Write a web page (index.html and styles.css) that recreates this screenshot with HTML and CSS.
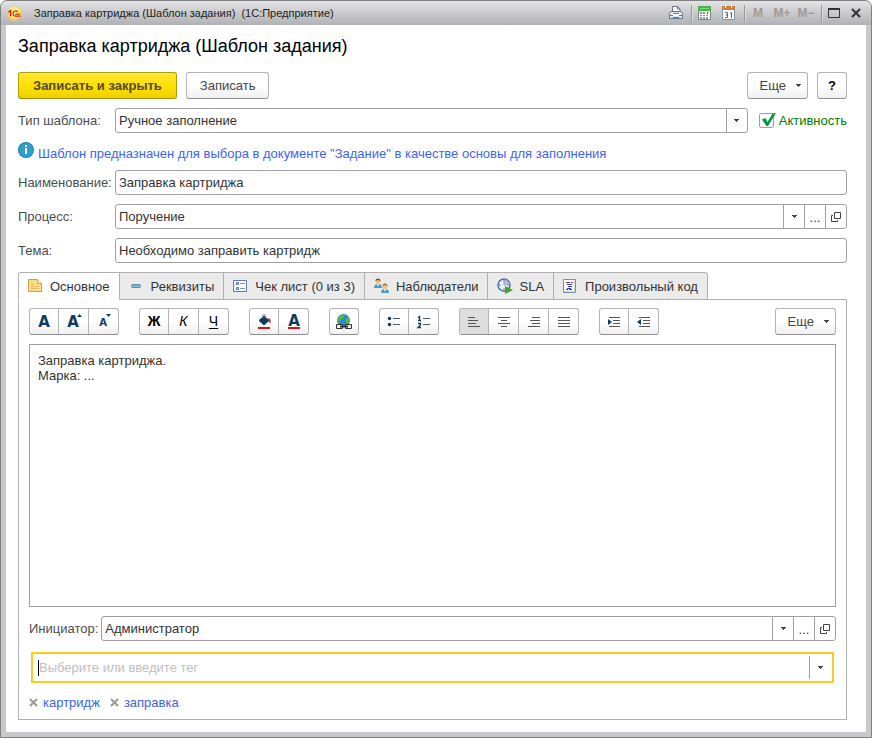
FILE: index.html
```html
<!DOCTYPE html>
<html lang="ru">
<head>
<meta charset="utf-8">
<meta name="viewport" content="width=device-width, initial-scale=1">
<title>Заправка картриджа (Шаблон задания)</title>
<link rel="stylesheet" href="styles.css">
</head>
<body>
<svg class="sprite" aria-hidden="true">
  <symbol id="i-open" viewBox="0 0 10 10"><path d="M3.5.5h6v6h-6zM2 3.5H.5v6h6V8" fill="none" stroke="#444"/></symbol>
  <symbol id="i-down" viewBox="0 0 5 3"><path d="M0 0h5v1H4v1H3v1H2V2H1V1H0z" fill="#444"/></symbol>
  <symbol id="i-x" viewBox="0 0 9 9"><path d="M1 1l7 7M8 1l-7 7" fill="none" stroke="#999" stroke-width="2"/></symbol>
</svg>
<div class="window">
  <header class="titlebar">
    <svg class="logo" viewBox="0 0 16 16" aria-hidden="true">
      <circle cx="8" cy="8" r="7.500" fill="#f7d24c"/><circle cx="8" cy="7" r="6.300" fill="#ffee80"/>
      <path d="M1.500 6.500L3.800 5v6" fill="none" stroke="#dd1c1c" stroke-width="1.600"/>
      <path d="M11.300 6.300a2.700 2.700 0 1 0-2.300 4.400H14.500M9 8.600H14" fill="none" stroke="#dd1c1c" stroke-width="1.300"/>
    </svg>
    <span class="caption">Заправка картриджа (Шаблон задания)&nbsp; (1С:Предприятие)</span>
    <div class="system">
      <button class="sys" aria-label="Печать"><svg width="16" height="16" viewBox="0 0 16 16"><path d="M4.500 8V1.500h5L12 4v4" fill="#fff" stroke="#64788e"/><path d="M9.500 1.500V4H12" fill="none" stroke="#64788e"/><path d="M1.500 8.500L3 6.500h10l1.500 2v5h-13z" fill="#dce6ef" stroke="#64788e"/><path d="M4 8h8v3H4z" fill="#fff"/><path d="M1 10.500h4M11 10.500h4M5 8.500h6M5 12.500h6" stroke="#64788e"/></svg></button>
      <i class="sep"></i>
      <button class="sys" aria-label="Калькулятор"><svg width="14" height="16" viewBox="0 0 14 16"><path d="M.5 1.500h12v13H.5z" fill="#fff" stroke="#788"/><path d="M0 1h13v5H0z" fill="#45b649"/><path d="M2 3h9v1H2z" fill="#7ada7d"/><path d="M2 7h2v2H2zM5 7h2v2H5zM2 10h2v1H2zM5 10h2v1H5zM2 12h2v2H2zM5 12h2v2H5zM8 10h2v1H8zM8 12h2v2H8z" fill="#8a9aa5"/><path d="M9 7h1v2H9z" fill="#e33"/></svg></button>
      <button class="sys" aria-label="Календарь"><svg width="14" height="16" viewBox="0 0 14 16"><path d="M.5 1.500h12v13H.5z" fill="#fff" stroke="#7f97aa"/><path d="M0 1h13v4H0z" fill="#c8843f"/><path d="M3.500 0v3M9.500 0v3" stroke="#fff"/><path d="M3 7.500h2.500v5H3M3.500 10h2M8 8.500l1.500-1V13" fill="none" stroke="#53697b"/></svg></button>
      <i class="sep"></i>
      <button class="sys mem">M</button>
      <button class="sys mem">M+</button>
      <button class="sys mem">M−</button>
      <i class="sep"></i>
      <button class="sys frame" aria-label="Развернуть"><svg width="12" height="10" viewBox="0 0 12 10"><path d="M.5 1v8.500h11V1z" fill="none" stroke="#333"/><path d="M0 0h12v2H0z" fill="#333"/></svg></button>
      <button class="sys frame" aria-label="Закрыть"><svg width="10" height="10" viewBox="0 0 10 10"><path d="M1 1l8 8M9 1L1 9" stroke="#333" stroke-width="2"/></svg></button>
    </div>
  </header>

  <main class="form">
    <h1>Заправка картриджа (Шаблон задания)</h1>

    <div class="commands">
      <button class="btn primary">Записать и закрыть</button>
      <button class="btn">Записать</button>
      <button class="btn more">Еще <svg class="down"><use href="#i-down"/></svg></button>
      <button class="btn help">?</button>
    </div>

    <div class="row">
      <label class="lbl" for="type">Тип шаблона:</label>
      <div class="field choice">
        <select id="type"><option>Ручное заполнение</option></select>
        <span class="pick"><svg class="down"><use href="#i-down"/></svg></span>
      </div>
      <label class="check"><input type="checkbox" checked><svg class="tick" viewBox="0 0 17 18"><path d="M3 7.500L6.300 6l2.200 4L13.500 1.500 17 1 9 14H7.500z" fill="#009646"/></svg><span>Активность</span></label>
    </div>

    <p class="hint">
      <svg width="16" height="16" viewBox="0 0 16 16" aria-hidden="true"><circle cx="8" cy="8" r="8" fill="#2a7fa8"/><circle cx="8" cy="8" r="7" fill="#2d9fd0"/><path d="M7 3h2v2H7zM7 6h2v6H7z" fill="#fff"/></svg>
      <span>Шаблон предназначен для выбора в документе "Задание" в качестве основы для заполнения</span>
    </p>

    <div class="row">
      <label class="lbl" for="name">Наименование:</label>
      <div class="field"><input id="name" type="text" value="Заправка картриджа"></div>
    </div>
    <div class="row">
      <label class="lbl" for="process">Процесс:</label>
      <div class="field">
        <input id="process" type="text" value="Поручение">
        <button class="pick" aria-label="Выбрать из списка"><svg class="down"><use href="#i-down"/></svg></button>
        <button class="pick dots">...</button>
        <button class="pick" aria-label="Открыть"><svg class="open"><use href="#i-open"/></svg></button>
      </div>
    </div>
    <div class="row">
      <label class="lbl" for="subject">Тема:</label>
      <div class="field"><input id="subject" type="text" value="Необходимо заправить картридж"></div>
    </div>

    <div class="tabs" role="tablist">
      <button class="tab active" role="tab" aria-selected="true"><svg viewBox="0 0 16 16"><path d="M.5 1.500h9l4 4v8H.5z" fill="#f6df86" stroke="#caa54a"/><path d="M9.500 1.500v4h4" fill="#fff4c0" stroke="#caa54a"/><path d="M3 6.500h3M3 8.500h4M8 8.500h3M3 10.500h5M9 10.500h2" stroke="#dcbb62"/></svg>Основное</button>
      <button class="tab" role="tab"><svg viewBox="0 0 16 16"><rect x="2.500" y="6.500" width="9" height="3" rx="1" fill="#84b4cc" stroke="#5d8ea8"/></svg>Реквизиты</button>
      <button class="tab" role="tab"><svg viewBox="0 0 16 16"><path d="M.5 2.500h13v11H.5z" fill="#f8faff" stroke="#6478b4"/><path d="M3.500 4.500h2v2h-2zM3.500 9.500h2v2h-2z" fill="#a9b8dc" stroke="#6478b4"/><path d="M7 5.500h5M7 10.500h5" stroke="#8795be"/></svg>Чек лист (0 из 3)</button>
      <button class="tab" role="tab"><svg viewBox="0 0 16 16"><circle cx="4" cy="3.500" r="2.500" fill="#f0c08a"/><path d="M1.500 3a2.500 2.500 0 0 1 5 0L4 2z" fill="#76502c"/><path d="M0 10q0-4 4-4t4 4z" fill="#4d9ac4"/><path d="M3 6h2L4 9z" fill="#fff"/><circle cx="11" cy="8.500" r="2.500" fill="#f0c08a"/><path d="M8.500 8a2.500 2.500 0 0 1 5 0L11 7z" fill="#a66c30"/><path d="M7 15q0-4 4-4t4 4z" fill="#4d9ac4"/><path d="M10 11h2l-1 3z" fill="#fff"/></svg>Наблюдатели</button>
      <button class="tab" role="tab"><svg viewBox="0 0 16 16"><circle cx="7" cy="7" r="6" fill="#eef4fc" stroke="#4a6eae" stroke-width="1.500"/><path d="M7 1.500V7h5.500A5.500 5.500 0 0 0 7 1.500z" fill="#a8c0e8"/><path d="M7 2v2M7 10v2M2 7h2M10 7h2" stroke="#d55"/><path d="M7 4v3l2 2" fill="none" stroke="#8aa6d6"/><path d="M8 8l8 4-8 4z" fill="#3da52c"/></svg>SLA</button>
      <button class="tab" role="tab"><svg viewBox="0 0 16 16"><path d="M.5 1.500h12v13H.5z" fill="#fff" stroke="#7890b0"/><path d="M1 13.500h11M11.500 2v12" stroke="#c8dcf0"/><path d="M3 4.500h2M8 4.500h2M3 11.500h2" stroke="#e02030"/><path d="M5 4.500h2M4 6.500h5M5 8.500h4M4 10.500h4M6 11.500h3" stroke="#3040d0"/></svg>Произвольный код</button>
    </div>

    <section class="panel">
      <div class="toolbar">
        <div class="group">
          <button class="tool" aria-label="Шрифт"><svg viewBox="0 0 16 16"><text class="glyph large" x="8" y="13">A</text></svg></button>
          <button class="tool" aria-label="Увеличить шрифт"><svg viewBox="0 0 16 16"><text class="glyph large" x="7" y="13">A</text><path d="M11 3h5l-2.500-3z" fill="#0d3c61"/></svg></button>
          <button class="tool" aria-label="Уменьшить шрифт"><svg viewBox="0 0 16 16"><text class="glyph small" x="7" y="12">A</text><path d="M10 0h5l-2.500 3z" fill="#0d3c61"/></svg></button>
        </div>
        <div class="group">
          <button class="tool letter bold">Ж</button>
          <button class="tool letter italic">К</button>
          <button class="tool letter under">Ч</button>
        </div>
        <div class="group">
          <button class="tool" aria-label="Цвет фона"><svg viewBox="0 0 16 16"><path d="M3 6.500L8 2l5 4.500L8 11z" fill="#0d3c61" stroke="#0d3c61" stroke-linejoin="round"/><path d="M6.500 4V1q1.500-1 3 0v3" fill="none" stroke="#8ba2b5"/><path d="M12 4q4 1 2 6-1-3-2-6z" fill="#e01010"/><path d="M2 13h12v2H2z" fill="#e01010"/></svg></button>
          <button class="tool" aria-label="Цвет текста"><svg viewBox="0 0 16 16"><text class="glyph large" x="8" y="12">A</text><path d="M2 13h12v2H2z" fill="#e01010"/></svg></button>
        </div>
        <div class="group">
          <button class="tool" aria-label="Гиперссылка"><svg viewBox="0 0 16 16"><circle cx="7.500" cy="6.500" r="6.500" fill="#258bd0"/><path d="M3 2q4-3 6-1l-2 4-3 1-1 3-2-3zM10 4l3 0 1 4-3 2-2-3z" fill="#5ab84a"/><path d="M.5 10.500h6v4h-6zM9.500 10.500h6v4h-6z" fill="#eee" stroke="#333"/><path d="M4 12.500h8" stroke="#333" stroke-width="2"/></svg></button>
        </div>
        <div class="group">
          <button class="tool" aria-label="Маркированный список"><svg viewBox="0 0 16 16"><circle cx="3.500" cy="4.500" r="1.700" fill="#0d3c61"/><circle cx="3.500" cy="10.500" r="1.700" fill="#0d3c61"/><path d="M7 4.500h7M7 10.500h7" stroke="#555"/></svg></button>
          <button class="tool" aria-label="Нумерованный список"><svg viewBox="0 0 16 16"><path d="M2 3.500l1.500-1V7M2 6.500h3M2 9.500h2.500v1.500L2 13.500h3" fill="none" stroke="#0d3c61" stroke-width="1.300"/><path d="M7 4.500h7M7 10.500h7" stroke="#555"/></svg></button>
        </div>
        <div class="group">
          <button class="tool pressed" aria-label="По левому краю"><svg viewBox="0 0 16 16"><path d="M2 3.500h7M2 6.500h10M2 9.500h8M2 12.500h12" stroke="#555"/></svg></button>
          <button class="tool" aria-label="По центру"><svg viewBox="0 0 16 16"><path d="M2 3.500h12M5 6.500h6M2 9.500h12M5 12.500h6" stroke="#555"/></svg></button>
          <button class="tool" aria-label="По правому краю"><svg viewBox="0 0 16 16"><path d="M6 3.500h8M4 6.500h10M6 9.500h8M2 12.500h12" stroke="#555"/></svg></button>
          <button class="tool" aria-label="По ширине"><svg viewBox="0 0 16 16"><path d="M2 3.500h12M2 6.500h12M2 9.500h12M2 12.500h12" stroke="#555"/></svg></button>
        </div>
        <div class="group">
          <button class="tool" aria-label="Увеличить отступ"><svg viewBox="0 0 16 16"><path d="M3 3.500h11M7 6.500h7M7 9.500h7M3 12.500h11" stroke="#555"/><path d="M2 5l4 3-4 3z" fill="#0d3c61"/></svg></button>
          <button class="tool" aria-label="Уменьшить отступ"><svg viewBox="0 0 16 16"><path d="M3 3.500h11M7 6.500h7M7 9.500h7M3 12.500h11" stroke="#555"/><path d="M5 5L1 8l4 3z" fill="#0d3c61"/></svg></button>
        </div>
        <button class="btn more">Еще <svg class="down"><use href="#i-down"/></svg></button>
      </div>

      <textarea class="editor" aria-label="Описание">Заправка картриджа.
Марка: ...</textarea>

      <div class="row owner">
        <label for="owner">Инициатор:</label>
        <div class="field">
          <input id="owner" type="text" value="Администратор">
          <button class="pick" aria-label="Выбрать из списка"><svg class="down"><use href="#i-down"/></svg></button>
          <button class="pick dots">...</button>
          <button class="pick" aria-label="Открыть"><svg class="open"><use href="#i-open"/></svg></button>
        </div>
      </div>

      <div class="tagbox">
        <i class="caret"></i>
        <input type="text" placeholder="Выберите или введите тег" aria-label="Тег">
        <button class="pick" aria-label="Выбрать из списка"><svg class="down"><use href="#i-down"/></svg></button>
      </div>

      <div class="tags">
        <button class="remove" aria-label="Удалить тег картридж"><svg class="x"><use href="#i-x"/></svg></button><a href="#">картридж</a>
        <button class="remove" aria-label="Удалить тег заправка"><svg class="x"><use href="#i-x"/></svg></button><a href="#">заправка</a>
      </div>
    </section>
  </main>
</div>
</body>
</html>
```
FILE: styles.css
```css
* { box-sizing: border-box; }

body {
  margin: 0;
  background: #fff;
  color: #333;
  font: 13px/15px "Liberation Sans", Arial, sans-serif;
}

button, input, select, textarea {
  margin: 0;
  padding: 0;
  border: 0;
  border-radius: 0;
  background: none;
  color: inherit;
  font: inherit;
  outline: 0;
}

svg { display: block; flex: none; }
.sprite { display: none; }
.down { width: 5px; height: 3px; }
.open { width: 10px; height: 10px; }
.x { width: 9px; height: 9px; }

.window {
  display: flex;
  flex-direction: column;
  min-height: 100vh;
  padding: 0 5px 5px;
  border: 1px solid #808083;
  border-radius: 7px 7px 0 0;
  background: #c8c9cc;
}

.titlebar {
  display: flex;
  align-items: center;
  height: 24px;
  margin: 0 -5px;
  padding: 0 4px 0 6px;
  border-radius: 6px 6px 0 0;
  background: linear-gradient(#e4e4e6, #cfcfd1 40%, #b0b1b4);
}
.logo { width: 15px; height: 15px; }
.caption {
  flex: 1;
  margin-left: 12px;
  color: #1c1c1c;
  font-size: 11px;
  white-space: nowrap;
}
.system { display: flex; align-items: center; }
.sys {
  display: flex;
  align-items: center;
  justify-content: center;
  min-width: 24px;
  height: 20px;
}
.sys.frame { min-width: 22px; }
.mem { color: #a39a93; font-size: 12px; font-weight: bold; }
.sep {
  width: 2px;
  height: 17px;
  margin-left: 3px;
  border-left: 1px solid #999;
  border-right: 1px solid #ddd;
}

.form {
  display: flex;
  flex: 1;
  flex-direction: column;
  padding: 10px 19px 12px 12px;
  background: #fff;
}

h1 {
  margin: 0 0 15px;
  color: #000;
  font-size: 18px;
  font-weight: normal;
  line-height: 22px;
}

.btn, .group {
  border: 1px solid #b4b4b4;
  border-bottom-color: #909090;
  border-radius: 3px;
  background: linear-gradient(#fff 50%, #f0f0f0);
}
.btn {
  height: 27px;
  padding: 0 13px;
  color: #444;
  white-space: nowrap;
}
.primary {
  padding: 0 14px;
  border-color: #b09c10 #b09c10 #a08e10;
  background: linear-gradient(#ffe838, #ffe000 50%, #efd000);
  color: #554a28;
  font-weight: bold;
}
.more {
  display: flex;
  align-items: center;
  gap: 10px;
  margin-left: auto;
  padding: 0 6px 0 12px;
}
.help { width: 30px; padding: 0; color: #000; font-weight: bold; }

.commands { display: flex; gap: 9px; margin-bottom: 9px; }

.row { display: flex; align-items: center; margin-bottom: 9px; }
.lbl { flex: 0 0 97px; white-space: nowrap; }
.row label { color: #4d4d4d; }

.field {
  display: flex;
  flex: 1;
  height: 25px;
  border: 1px solid #a0a0a0;
  border-radius: 3px;
}
.field input, .field select, .tagbox input {
  flex: 1;
  min-width: 0;
  padding: 0 3px;
}
.pick {
  display: flex;
  flex: none;
  align-items: center;
  justify-content: center;
  width: 21px;
  border-left: 1px solid #a0a0a0;
}
.dots { padding-top: 2px; }

.choice { display: grid; grid-template-columns: 1fr 21px; }
.choice select { grid-area: 1 / 1 / 2 / 3; appearance: none; }
.choice .pick { grid-area: 1 / 2; pointer-events: none; }

.row .check {
  display: grid;
  grid-template-columns: 16px auto;
  align-items: center;
  gap: 4px;
  margin-left: 11px;
  color: #008000;
}
.check input {
  grid-area: 1 / 1;
  width: 15px;
  height: 15px;
  appearance: none;
  border: 1px solid #a0a0a0;
  border-radius: 2px;
}
.tick { grid-area: 1 / 1; width: 17px; height: 18px; pointer-events: none; }

.hint {
  display: flex;
  gap: 4px;
  height: 19px;
  margin: 0 0 9px;
  color: #3c64f5;
}
.hint span { padding-top: 4px; }

.tabs { position: relative; z-index: 1; display: flex; }
.tab {
  display: flex;
  align-items: center;
  gap: 6px;
  height: 28px;
  padding: 0 9px;
  border: 1px solid #b0b0b0;
  border-left-width: 0;
  background: #ebebeb;
  white-space: nowrap;
}
.tab svg { width: 16px; height: 16px; }
.tab:first-child { border-left-width: 1px; border-radius: 3px 0 0 0; }
.tab:last-child { border-radius: 0 3px 0 0; }
.tab.active { border-bottom-color: #fff; background: #fff; }

.panel {
  display: flex;
  flex: 1;
  flex-direction: column;
  margin-top: -1px;
  padding: 8px 10px 9px;
  border: 1px solid #b0b0b0;
}

.toolbar { display: flex; gap: 20px; margin-bottom: 9px; }
.group { display: flex; height: 27px; }
.tool {
  display: flex;
  align-items: center;
  justify-content: center;
  width: 30px;
}
.tool:first-child { width: 28px; }
.tool + .tool { border-left: 1px solid #b4b4b4; }
.tool svg { width: 16px; height: 16px; overflow: visible; }
.glyph {
  fill: #0d3c61;
  font-family: "DejaVu Sans", sans-serif;
  font-weight: bold;
  text-anchor: middle;
}
.large { font-size: 15px; }
.small { font-size: 10px; }
.pressed { background: #dedede; }
.letter { color: #000; font-size: 14px; }
.bold { font-weight: bold; }
.italic { font-style: italic; }
.under { text-decoration: underline; text-underline-offset: 2px; }

.editor {
  display: block;
  flex: 1;
  width: 100%;
  min-height: 200px;
  margin-bottom: 9px;
  padding: 8px;
  border: 1px solid #a0a0a0;
  resize: none;
}

.owner { gap: 3px; }

.tagbox {
  display: flex;
  height: 31px;
  margin: 2px 2px 12px;
  padding: 2px 2px 2px 5px;
  border: 2px solid #fcca20;
}
.tagbox input { padding: 0; }
.tagbox input::placeholder { color: #c0c0c0; opacity: 1; }
.caret { align-self: center; width: 1px; height: 16px; background: #000; }

.tags { display: flex; align-items: center; }
.tags a { margin: 0 10px 0 5px; color: #3c64dc; text-decoration: none; }
```
